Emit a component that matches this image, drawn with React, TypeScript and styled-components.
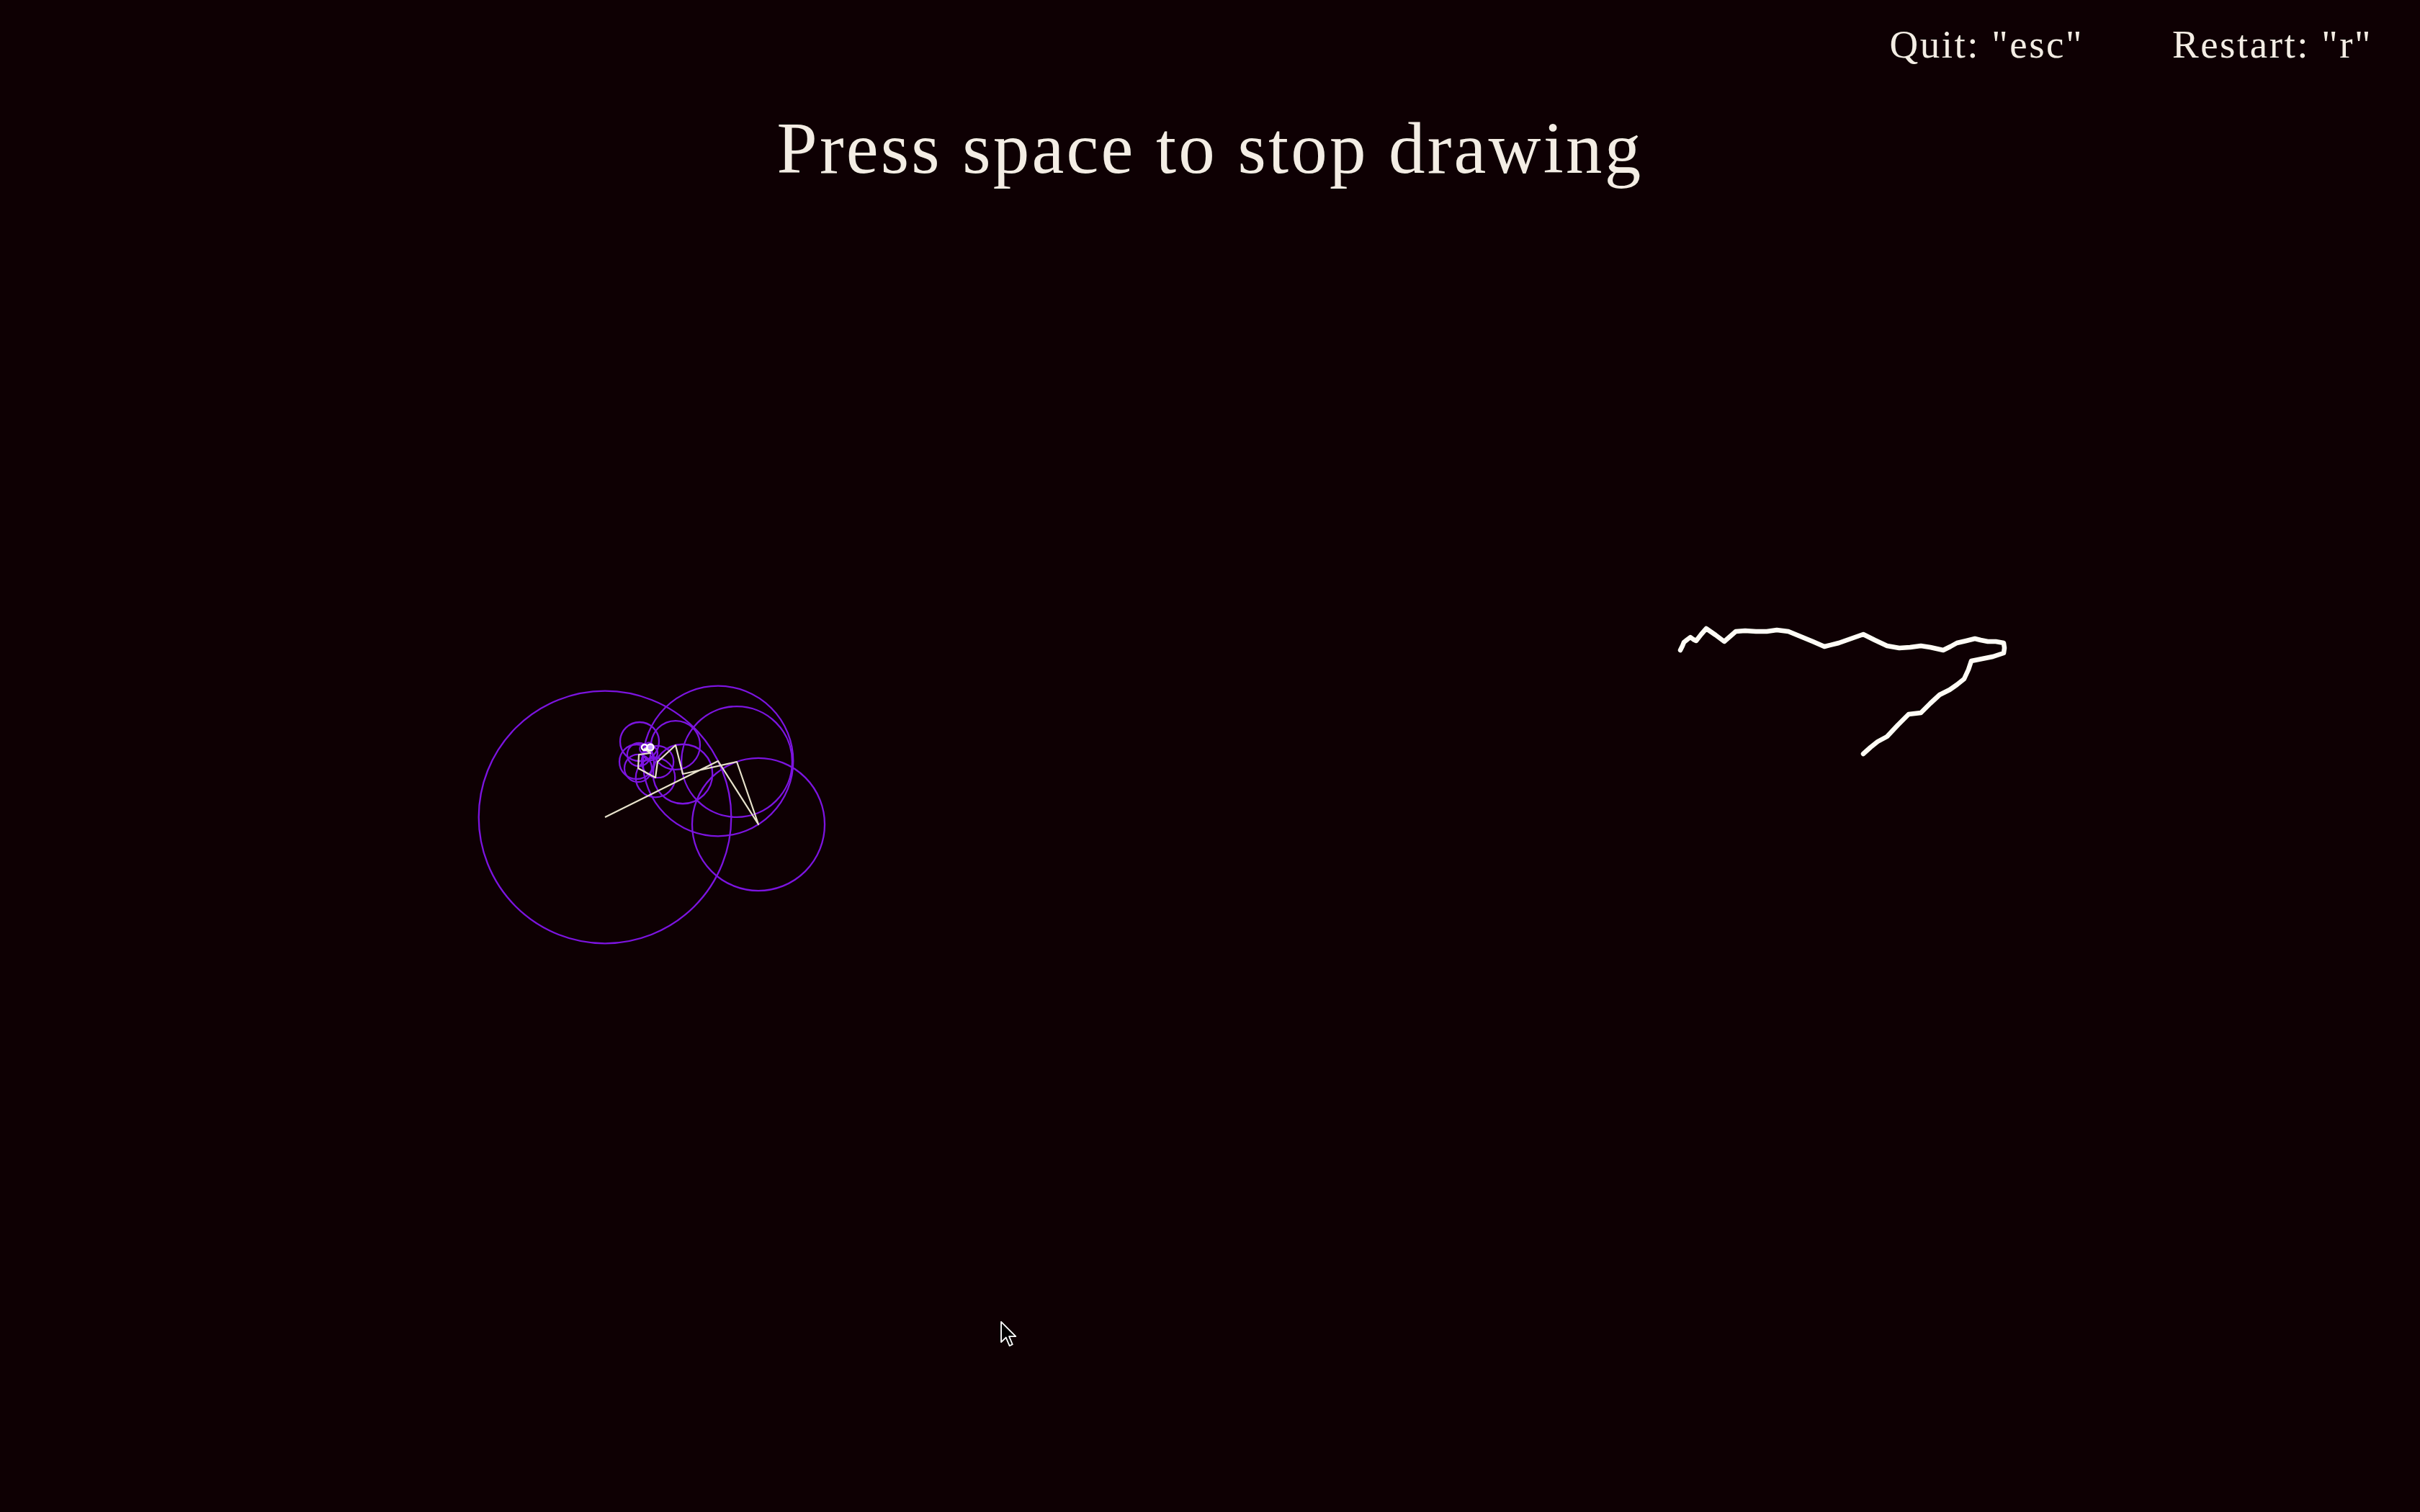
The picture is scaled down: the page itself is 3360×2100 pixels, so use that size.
import React from "react";
import styled, { createGlobalStyle } from "styled-components";

const GlobalStyle = createGlobalStyle`
  html, body, #root {
    margin: 0;
    padding: 0;
    width: 100%;
    height: 100%;
    background: #0e0003;
  }
  body {
    overflow: hidden;
  }
`;

const Stage = styled.div`
  position: relative;
  width: 100vw;
  height: 100vh;
  background: #0e0003;
  overflow: hidden;
  font-family: "Liberation Serif", "DejaVu Serif", serif;
  color: #f3ede4;
`;

const Canvas = styled.svg`
  position: absolute;
  inset: 0;
  width: 100%;
  height: 100%;
  z-index: 0;
`;

const Hud = styled.div`
  position: relative;
  z-index: 1;
  display: flex;
  flex-direction: column;
`;

const KeyBar = styled.div`
  display: flex;
  justify-content: flex-end;
  gap: 123px;
  padding: 34px 66px 0 0;
`;

const KeyHint = styled.span`
  font-size: 55px;
  line-height: 1;
  letter-spacing: 2.5px;
  white-space: nowrap;
`;

const Title = styled.h1`
  margin: 67px 0 0;
  text-align: center;
  font-weight: 400;
  font-size: 101px;
  line-height: 1;
  letter-spacing: 3.2px;
`;

const Pointer = styled.svg`
  position: absolute;
  left: 1388px;
  top: 1834px;
  width: 24px;
  height: 38px;
  z-index: 2;
`;

// the epicycle chain, from the fixed centre out to the pen tip
const arm: [number, number][] = [
  [840, 1135],
  [997, 1057],
  [1053, 1145],
  [1023, 1058],
  [948, 1075],
  [938, 1035],
  [913, 1058],
  [910, 1080],
  [886, 1067],
  [887, 1048],
  [903, 1046],
  [895, 1040],
  [901, 1037],
  [897, 1041],
  [900, 1039],
];

const extraWheels: [number, number, number][] = [
  [888, 1030, 27],
  [884, 1058, 24],
];

// what the pen has drawn so far
const trace: [number, number][] = [
  [2333, 903], [2336, 897], [2338, 892], [2343, 888], [2347, 885], [2351, 888],
  [2355, 890], [2362, 881], [2369, 873], [2382, 882], [2394, 891], [2402, 884],
  [2410, 877], [2423, 876], [2438, 877], [2453, 877], [2467, 875], [2483, 877],
  [2500, 884], [2517, 891], [2533, 898], [2553, 893], [2570, 887], [2587, 881],
  [2603, 889], [2620, 897], [2637, 900], [2652, 899], [2667, 897], [2680, 899],
  [2698, 903], [2708, 898], [2717, 893], [2730, 890], [2742, 887], [2750, 889],
  [2760, 891], [2771, 891], [2782, 893], [2783, 900], [2782, 907], [2767, 912],
  [2752, 915], [2737, 918], [2735, 924], [2733, 930], [2727, 943], [2717, 951],
  [2707, 958], [2693, 965], [2680, 977], [2667, 990], [2650, 992], [2635, 1007],
  [2620, 1023], [2607, 1030], [2597, 1038], [2587, 1047],
];

const dist = (a: [number, number], b: [number, number]) =>
  Math.hypot(b[0] - a[0], b[1] - a[1]);

const Epicycles: React.FC = () => {
  const wheels = arm.slice(0, -1).map((p, i) => ({
    cx: p[0],
    cy: p[1],
    r: dist(p, arm[i + 1]),
  }));
  return (
    <g>
      {wheels.map((w, i) => (
        <circle key={i} cx={w.cx} cy={w.cy} r={w.r} fill="none" stroke="#7c14e0" strokeWidth={2.3} />
      ))}
      {extraWheels.map(([cx, cy, r], i) => (
        <circle key={"x" + i} cx={cx} cy={cy} r={r} fill="none" stroke="#7c14e0" strokeWidth={2.3} />
      ))}
      <polyline
        points={arm.map((p) => p.join(",")).join(" ")}
        fill="none"
        stroke="#e8e2cc"
        strokeWidth={2.2}
        strokeLinejoin="round"
      />
      <circle cx={895} cy={1038} r={4} fill="none" stroke="#ffffff" strokeWidth={2.5} />
      <circle cx={903} cy={1038} r={4.5} fill="#c9a0ff" stroke="#ffffff" strokeWidth={2.5} />
    </g>
  );
};

const App: React.FC = () => {
  return (
    <>
      <GlobalStyle />
      <Stage>
        <Canvas viewBox="0 0 3360 2100" preserveAspectRatio="xMinYMin meet">
          <Epicycles />
          <polyline
            points={trace.map((p) => p.join(",")).join(" ")}
            fill="none"
            stroke="#fffdf6"
            strokeWidth={6.5}
            strokeLinejoin="round"
            strokeLinecap="round"
          />
        </Canvas>
        <Hud>
          <KeyBar>
            <KeyHint>Quit: "esc"</KeyHint>
            <KeyHint>Restart: "r"</KeyHint>
          </KeyBar>
          <Title>Press space to stop drawing</Title>
        </Hud>
        <Pointer viewBox="0 0 13 21">
          <path
            d="M1 1 L1 16.6 L4.7 13 L7.4 19.4 L9.7 18.4 L7.1 12.2 L12.2 12.2 Z"
            fill="#000"
            stroke="#fff"
            strokeWidth={1}
            strokeLinejoin="round"
          />
        </Pointer>
      </Stage>
    </>
  );
};

export default App;
